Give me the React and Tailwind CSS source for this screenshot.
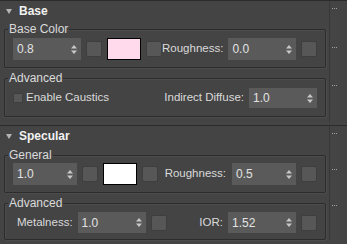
import React from 'react';

const font = { fontFamily: '"Liberation Sans", Arial, sans-serif' };

function Arrows() {
  return (
    <svg width="6" height="9" viewBox="0 0 6 9" className="shrink-0">
      <path d="M3 0 L6 3.5 L0 3.5 Z" fill="#c8c8c8" />
      <path d="M0 5.5 L6 5.5 L3 9 Z" fill="#c8c8c8" />
    </svg>
  );
}

function Spinner({ value, w = 'w-[68px]', h = 'h-[21px]' }) {
  return (
    <div className={`${w} ${h} bg-[#5a5a5a] flex items-center justify-between pl-[4px] pr-[4px] shrink-0`}>
      <span className="text-[12px] text-[#e2e2e2] leading-none">{value}</span>
      <Arrows />
    </div>
  );
}

function Square() {
  return <div className="w-[16px] h-[16px] bg-[#575757] border border-[#3e3e3e] rounded-[2px] shrink-0" />;
}

function Swatch({ color }) {
  return <div className={`w-[34px] h-[22px] border border-black shrink-0 ${color}`} />;
}

function Group({ label, className, children }) {
  return (
    <fieldset className={`border border-[#2c2c2c] rounded-[2px] shadow-[inset_1px_1px_0_#4c4c4c,1px_1px_0_#4c4c4c] px-[8px] ${className}`}>
      <legend className="-ml-[5px] px-[1px] text-[12px] leading-[14px] text-[#dadada]">{label}</legend>
      {children}
    </fieldset>
  );
}

function Grip() {
  return (
    <div className="grid grid-cols-3 gap-[1px] w-[5px]">
      {Array.from({ length: 9 }).map((_, i) => (
        <div key={i} className="w-[1px] h-[1px] bg-[#a0a0a0]" />
      ))}
    </div>
  );
}

function Rollout({ title, children, className }) {
  return (
    <div className={`flex border-t border-[#2b2b2b] ${className}`}>
      <div className="w-[330px] border-r border-[#383838]">
        <div className="h-[20px] flex items-center pl-[6px]">
          <svg width="6" height="5" viewBox="0 0 6 5" className="mr-[7px]">
            <path d="M0 0 L6 0 L3 5 Z" fill="#b5b5b5" />
          </svg>
          <span className="text-[12px] font-bold text-[#f2f2f2]">{title}</span>
        </div>
        <div className="pl-[4px] pr-[3px]">{children}</div>
      </div>
      <div className="flex-1 flex pl-[2px] pt-[7px]">
        <Grip />
      </div>
    </div>
  );
}

export default function App() {
  return (
    <div className="w-[347px] h-[244px] bg-[#444444] overflow-hidden text-[#dadada]" style={font}>
      <Rollout title="Base" className="h-[123px]">
        <Group label="Base Color" className="mt-[1px] pt-[2px] pb-[7px]">
          <div className="flex items-center">
            <Spinner value="0.8" h="h-[22px]" />
            <div className="ml-[5px]"><Square /></div>
            <div className="ml-[5px]"><Swatch color="bg-[#ffd9ec]" /></div>
            <div className="ml-[5px]"><Square /></div>
            <span className="ml-auto text-[11.5px]">Roughness:</span>
            <div className="ml-[5px]"><Spinner value="0.0" h="h-[22px]" /></div>
            <div className="ml-[5px]"><Square /></div>
          </div>
        </Group>
        <Group label="Advanced" className="mt-[3px] pt-[3px] pb-[8px]">
          <div className="flex items-center">
            <div className="w-[10px] h-[10px] bg-[#575757] border border-[#3e3e3e]" />
            <span className="ml-[3px] text-[11.5px]">Enable Caustics</span>
            <span className="ml-auto text-[11.5px]">Indirect Diffuse:</span>
            <div className="ml-[5px]"><Spinner value="1.0" h="h-[20px]" /></div>
          </div>
        </Group>
      </Rollout>
      <Rollout title="Specular" className="mt-[2px]">
        <Group label="General" className="mt-[2px] pt-[1px] pb-[7px]">
          <div className="flex items-center">
            <Spinner value="1.0" w="w-[64px]" h="h-[22px]" />
            <div className="ml-[5px]"><Square /></div>
            <div className="ml-[5px]"><Swatch color="bg-white" /></div>
            <div className="ml-[5px]"><Square /></div>
            <span className="ml-auto text-[11.5px]">Roughness:</span>
            <div className="ml-[6px]"><Spinner value="0.5" w="w-[64px]" h="h-[22px]" /></div>
            <div className="ml-[5px]"><Square /></div>
          </div>
        </Group>
        <Group label="Advanced" className="mt-[3px] pt-[2px] pb-[6px]">
          <div className="flex items-center">
            <span className="ml-[4px] text-[11.5px]">Metalness:</span>
            <div className="ml-[5px]"><Spinner value="1.0" /></div>
            <div className="ml-[5px]"><Square /></div>
            <span className="ml-auto text-[11.5px]">IOR:</span>
            <div className="ml-[5px]"><Spinner value="1.52" /></div>
            <div className="ml-[5px]"><Square /></div>
          </div>
        </Group>
      </Rollout>
    </div>
  );
}
